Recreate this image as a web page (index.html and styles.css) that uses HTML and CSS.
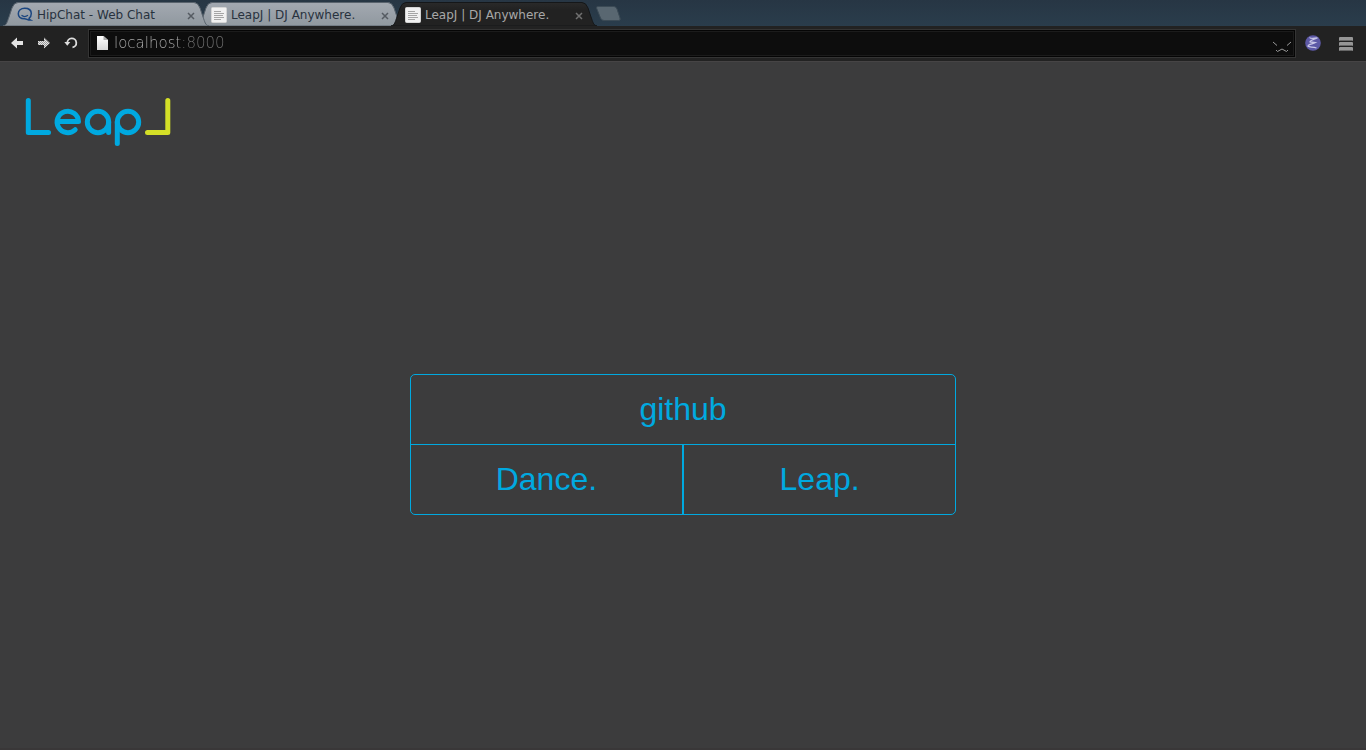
FILE: index.html
```
<!DOCTYPE html>
<html lang="en">
<head>
<meta charset="utf-8">
<meta name="viewport" content="width=device-width, initial-scale=1">
<title>LeapJ | DJ Anywhere.</title>
<link rel="stylesheet" href="styles.css">
</head>
<body>
<svg class="defs" width="0" height="0" aria-hidden="true">
  <defs>
    <linearGradient id="tab-fill" x1="0" y1="0" x2="0" y2="1">
      <stop offset="0" stop-color="#a3a9b1"/><stop offset="1" stop-color="#90989f"/>
    </linearGradient>
    <linearGradient id="tab-dark" x1="0" y1="0" x2="0" y2="1">
      <stop offset="0" stop-color="#2a2a2a"/><stop offset="0.3" stop-color="#222"/><stop offset="1" stop-color="#222"/>
    </linearGradient>
    <linearGradient id="paper" x1="0" y1="0" x2="0" y2="1">
      <stop offset="0" stop-color="#fff"/><stop offset="1" stop-color="#d8d8d8"/>
    </linearGradient>
    <pattern id="mesh" width="2" height="2" patternUnits="userSpaceOnUse">
      <rect width="2" height="2" fill="#9a9a9a"/><path d="M0 0H1V1H0ZM1 1H2V2H1Z" fill="#e6e6e6"/>
    </pattern>
    <symbol id="tab-shape" viewBox="0 0 206 24">
      <path d="M0 24C4 23 4 20 6 15L9 6Q11 .5 15 .5H191Q195 .5 197 6L200 15C202 20 202 23 206 24Z"/>
    </symbol>
    <symbol id="page-icon" viewBox="0 0 16 16">
      <rect x=".5" y=".5" width="15" height="15" rx="1" fill="#f1f1f1" stroke="#d5d5d5"/>
      <path d="M3 4.500H10M3 6.500H13M3 8.500H12M3 10.500H13M3 12.500H10" stroke="#a5a5a5"/>
    </symbol>
    <symbol id="cross" viewBox="0 0 8 8">
      <path d="M1 1L7 7M7 1L1 7" fill="none" stroke="currentColor" stroke-width="1.5"/>
    </symbol>
  </defs>
</svg>

<nav class="tabs" aria-label="Tabs">
  <div class="tab tab-first">
    <svg class="tab-bg" preserveAspectRatio="none"><use href="#tab-shape"/></svg>
    <svg class="tab-icon" viewBox="0 0 16 16" aria-hidden="true">
      <path d="M12 11.300C14 10 14.300 8 14.300 6.500C14.300 3.100 11.500 1.300 7.700 1.300S1.300 3.300 1.300 6.700S4 11.700 7.700 11.700C9.800 11.700 10.500 13.300 13.500 13.100C12.400 12.500 12 12 12 11.300Z" fill="none" stroke="#1b4680" stroke-width="1.500"/>
      <path d="M4.500 8.300C6.500 10 9 9.800 11 8.300" fill="none" stroke="#1b4680" stroke-width="1.200"/>
    </svg>
    <button class="tab-title" type="button">HipChat - Web Chat</button>
    <button class="tab-close" type="button" aria-label="Close tab"><svg><use href="#cross"/></svg></button>
  </div>
  <div class="tab">
    <svg class="tab-bg" preserveAspectRatio="none"><use href="#tab-shape"/></svg>
    <svg class="tab-icon" aria-hidden="true"><use href="#page-icon"/></svg>
    <button class="tab-title" type="button">LeapJ | DJ Anywhere.</button>
    <button class="tab-close" type="button" aria-label="Close tab"><svg><use href="#cross"/></svg></button>
  </div>
  <div class="tab tab-active">
    <svg class="tab-bg" preserveAspectRatio="none"><use href="#tab-shape"/></svg>
    <svg class="tab-icon" aria-hidden="true"><use href="#page-icon"/></svg>
    <button class="tab-title" type="button">LeapJ | DJ Anywhere.</button>
    <button class="tab-close" type="button" aria-label="Close tab"><svg><use href="#cross"/></svg></button>
  </div>
  <button class="new-tab" type="button" aria-label="New tab">
    <svg viewBox="0 0 26 16"><path d="M3 .5H19Q21 .5 22 3L25 12Q26 14.500 23.500 14.500H9Q6.500 14.500 5.500 12L1.500 2Q1 .5 3 .5Z" fill="#596771" stroke="#3b4a55"/></svg>
  </button>
</nav>

<div class="toolbar">
  <button class="tool" type="button" aria-label="Back">
    <svg viewBox="0 0 14 14"><path d="M1 7L7 1.500V5H13V9H7V12.500Z" fill="#e2e2e2"/></svg>
  </button>
  <button class="tool" type="button" aria-label="Forward">
    <svg viewBox="0 0 14 14"><path d="M13 7L7 1.500V5H1V9H7V12.500Z" fill="url(#mesh)"/></svg>
  </button>
  <button class="tool" type="button" aria-label="Reload">
    <svg viewBox="0 0 14 14"><path d="M3.300 7A4.500 4.500 0 1 1 8.500 11.400" fill="none" stroke="#dedede" stroke-width="1.800"/><path d="M.3 6H6.300L3.300 9.800Z" fill="#dedede"/></svg>
  </button>
  <div class="address">
    <svg class="doc" viewBox="0 0 12 16" aria-hidden="true"><path d="M1 1H7.500L12 5V15H1Z" fill="url(#paper)"/><path d="M7.500 1V5H12Z" fill="#aaa"/></svg>
    <input class="url" type="text" value="localhost:8000" aria-label="Address">
    <svg class="star" viewBox="0 0 20 16" aria-hidden="true"><path d="M1 5L5 8.500M19 5L15 8.500M4 13L5.500 14.500L10 12L14.500 14.500L16 13" fill="none" stroke="#999" stroke-width="1"/></svg>
  </div>
  <button class="extension" type="button" aria-label="Extension">
    <svg viewBox="0 0 16 16"><circle cx="8" cy="8" r="7.800" fill="#5d59a6"/><path d="M4.500 2.500C5.500 4 9 3.500 12.500 3C9 4 4.500 6 5 7C6 7.500 9 7 10.500 7.500C7.500 8.500 2.500 10 3 11.300C4.500 12.500 8 11.500 11.500 13" fill="none" stroke="#c9c7e8" stroke-width="1.300"/></svg>
  </button>
  <button class="menu-button" type="button" aria-label="Menu">
    <svg viewBox="0 0 14 16"><g fill="#969696"><rect y="1" width="14" height="4" rx="1"/><rect y="6" width="14" height="4" rx="1"/><rect y="11" width="14" height="4" rx="1"/></g><path d="M1 4.500H13M1 9.500H13M1 14.500H13" stroke="#666"/></svg>
  </button>
</div>

<div class="page">
  <header class="header">
    <svg class="logo" viewBox="0 0 146 49" role="img" aria-label="LeapJ">
      <g fill="none" stroke="#00a9e0" stroke-width="5" stroke-linecap="round" stroke-linejoin="round">
        <path d="M3.300 3.500V35.500H23.500"/>
        <path d="M33 24.500H53.500A10.700 10.700 0 1 0 50.200 32.700"/>
        <circle cx="73" cy="25" r="10.700"/>
        <path d="M83.600 25V35.500"/>
        <circle cx="103" cy="25" r="10.700"/>
        <path d="M92.300 25V46.500"/>
      </g>
      <path d="M122.500 35.500H142.800V3.500" fill="none" stroke="#d4df27" stroke-width="5" stroke-linecap="round" stroke-linejoin="round"/>
    </svg>
  </header>
  <main class="main">
    <nav class="menu" aria-label="Main">
      <a class="menu-item menu-wide" href="#github">github</a>
      <a class="menu-item" href="#dance">Dance.</a>
      <a class="menu-item" href="#leap">Leap.</a>
    </nav>
  </main>
</div>
</body>
</html>
```
FILE: styles.css
```
* { box-sizing: border-box; }

body {
  margin: 0;
  min-height: 100vh;
  display: flex;
  flex-direction: column;
  background: #3c3c3d;
  font-family: "Liberation Sans", Arial, sans-serif;
}

button {
  margin: 0;
  padding: 0;
  border: 0;
  background: none;
  color: inherit;
  font: inherit;
}

svg { display: block; }
.defs { position: absolute; }

/* Tab strip */
.tabs {
  display: flex;
  padding: 2px 0 0 3px;
  background: linear-gradient(#273644, #2a3d4c);
  font: 12px/16px "DejaVu Sans", sans-serif;
}

.tab {
  position: relative;
  display: flex;
  align-items: center;
  width: 206px;
  height: 24px;
  margin-right: -12px;
  padding: 2px 14px 0;
  color: #28323e;
}

.tab-first { z-index: 1; }
.tab-active { z-index: 2; color: #a8a8a8; }

.tab-bg {
  position: absolute;
  inset: 0;
  width: 100%;
  height: 100%;
  fill: url(#tab-fill);
  stroke: #59636d;
}

.tab-active .tab-bg { fill: url(#tab-dark); stroke: #151719; }

.tab-icon { position: relative; width: 16px; height: 16px; }
.tab-title { position: relative; flex: 1; padding-left: 4px; text-align: left; white-space: nowrap; }
.tab-close { position: relative; padding-top: 2px; color: #555b62; }
.tab-close svg { width: 8px; height: 8px; }
.tab-active .tab-close { color: #707070; }

.new-tab { width: 26px; margin-left: 10px; }
.new-tab svg { width: 26px; height: 16px; }

/* Toolbar */
.toolbar {
  display: flex;
  align-items: center;
  height: 36px;
  padding: 0 13px 0 10px;
  background: #222;
  border-bottom: 1px solid #464445;
}

.tool { margin: 0 13px 2px 0; }
.tool svg { width: 14px; height: 14px; }

.address {
  flex: 1;
  display: flex;
  align-items: center;
  height: 29px;
  margin-left: -3px;
  padding: 0 3px 1px 7px;
  background: #0d0d0d;
  border: 1px solid #343434;
  box-shadow: inset 0 0 0 1px #050505, inset 0 0 0 2px #1b1b1b;
}

.doc { width: 12px; height: 16px; }

.url {
  flex: 1;
  min-width: 0;
  height: 20px;
  margin-left: 6px;
  padding: 0;
  border: 0;
  outline: 0;
  background: linear-gradient(90deg, #b0b0b0 65px, #707070 65px);
  background-clip: text;
  -webkit-background-clip: text;
  color: transparent;
  font: 200 15px/20px "DejaVu Sans Light", "DejaVu Sans", sans-serif;
}

.star { width: 20px; height: 16px; margin-top: 4px; }
.extension { margin: 0 0 2px 9px; }
.extension svg { width: 16px; height: 16px; }
.menu-button { margin-left: 18px; }
.menu-button svg { width: 14px; height: 16px; }

/* Page */
.page {
  flex: 1;
  display: flex;
  flex-direction: column;
  border-bottom: 2px solid #393738;
}

.header { padding: 35px 25px 0; }
.logo { width: 146px; height: 49px; }

.main {
  flex: 1;
  display: flex;
  align-items: center;
  justify-content: center;
  padding-bottom: 5px;
}

.menu {
  display: grid;
  grid-template-columns: 1fr 1fr;
  width: 40%;
  border: 1px solid #00a9e0;
  border-radius: 5px;
}

.menu-item {
  padding: 16px 0 17px;
  color: #00a9e0;
  font-size: 32px;
  line-height: 36px;
  text-align: center;
  text-decoration: none;
}

.menu-wide { grid-column: 1 / -1; border-bottom: 1px solid #00a9e0; }
.menu-wide + .menu-item { border-right: 1px solid #00a9e0; }
.menu-item:last-child { border-left: 1px solid #00a9e0; }
```
